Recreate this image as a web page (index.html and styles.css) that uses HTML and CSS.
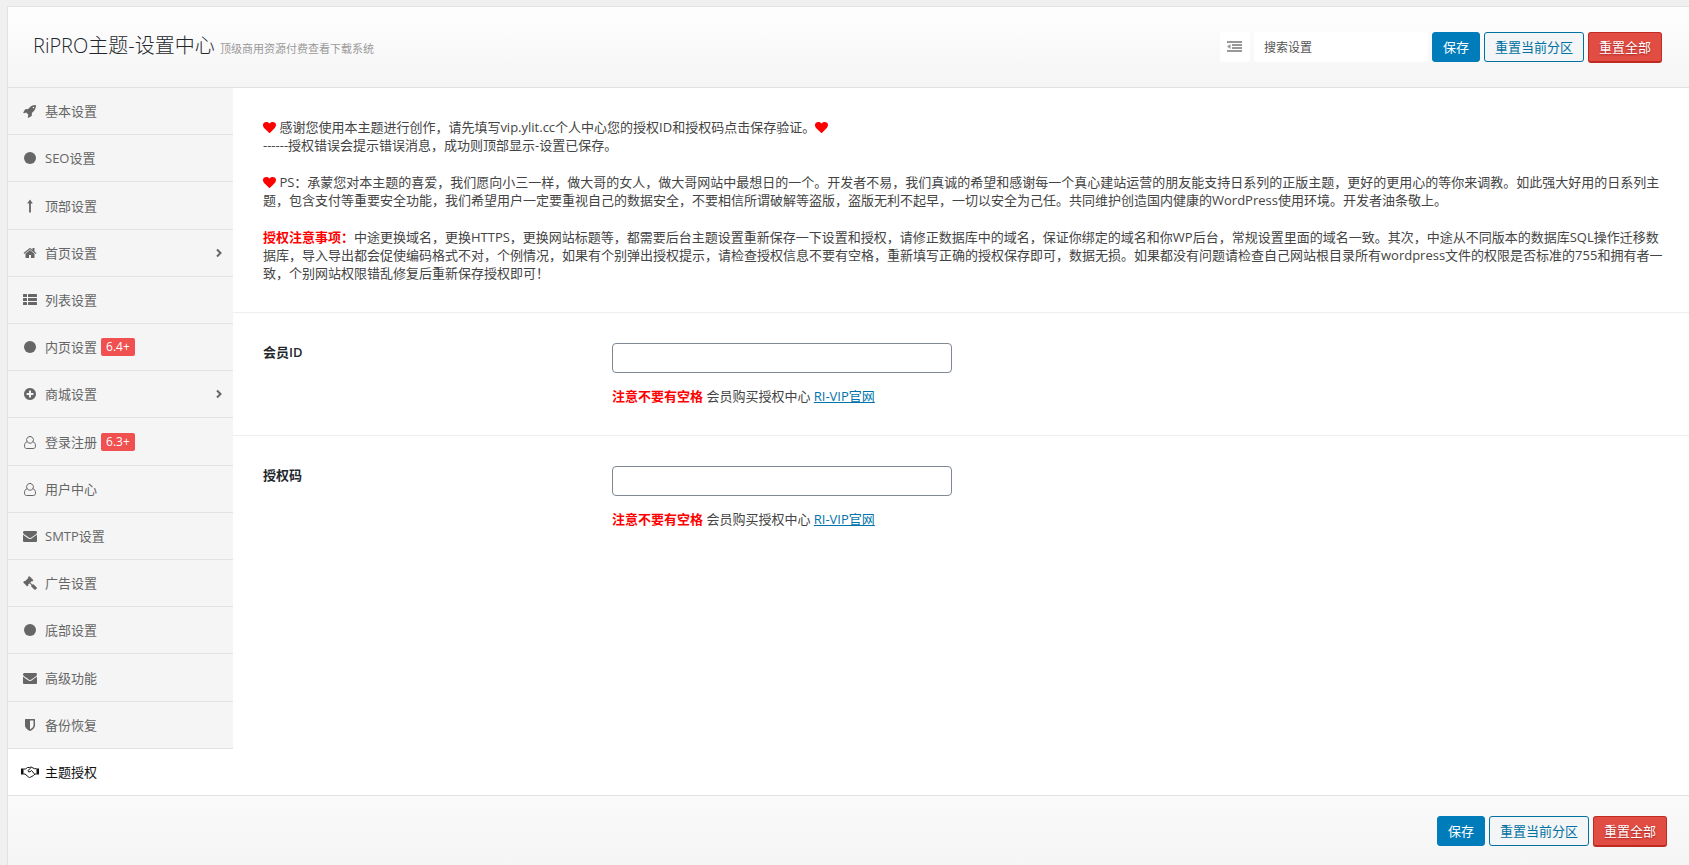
FILE: index.html
```html
<!DOCTYPE html>
<html lang="zh-CN">

<head>
    <meta charset="UTF-8">
    <meta name="viewport" content="width=device-width, initial-scale=1.0">
    <title>RiPRO主题-设置中心</title>
    <link rel="stylesheet" href="styles.css">
</head>

<body>
    <!-- Icon sprite -->
    <svg class="sprite" aria-hidden="true">
        <symbol id="rocket" viewBox="0 0 1792 1792"><path d="M1440 448q0-40-28-68t-68-28-68 28-28 68 28 68 68 28 68-28 28-68zm224-288q0 249-75.5 430.5t-253.5 360.5q-81 80-195 176l-20 379q-2 16-16 26l-384 224q-7 4-16 4-12 0-23-9l-64-64q-13-14-8-32l85-276-281-281-276 85q-3 1-9 1-14 0-23-9l-64-64q-17-19-5-39l224-384q10-14 26-16l379-20q96-114 176-195 188-187 358-258t431-71q14 0 24 9.5t10 22.5z"/></symbol>
        <symbol id="circle" viewBox="0 0 1792 1792"><circle cx="896" cy="896" r="768"/></symbol>
        <symbol id="arrow-up" viewBox="0 0 14 14"><path d="M6.100 13.500V4.500H4.200L7 .5L9.800 4.500H7.900V13.500Z"/></symbol>
        <symbol id="home" viewBox="0 0 1792 1792"><path d="M1472 992v480q0 26-19 45t-45 19h-384v-384h-256v384h-384q-26 0-45-19t-19-45v-480q0-1 .5-3t.5-3l575-474 575 474q1 2 1 6zm223-69l-62 74q-8 9-21 11h-3q-13 0-21-7l-692-577-692 577q-12 8-24 7-13-2-21-11l-62-74q-8-10-7-23.5t11-21.5l719-599q32-26 76-26t76 26l244 204v-195q0-14 9-23t23-9h192q14 0 23 9t9 23v408l219 182q10 8 11 21.5t-7 23.5z"/></symbol>
        <symbol id="th-list" viewBox="0 0 14 14"><rect y="1" width="4" height="3" rx=".6"/><rect x="5" y="1" width="9" height="3" rx=".6"/><rect y="5" width="4" height="3" rx=".6"/><rect x="5" y="5" width="9" height="3" rx=".6"/><rect y="9" width="4" height="3" rx=".6"/><rect x="5" y="9" width="9" height="3" rx=".6"/></symbol>
        <symbol id="plus-circle" viewBox="0 0 1792 1792"><path d="M1344 960v-128q0-26-19-45t-45-19h-256v-256q0-26-19-45t-45-19h-128q-26 0-45 19t-19 45v256h-256q-26 0-45 19t-19 45v128q0 26 19 45t45 19h256v256q0 26 19 45t45 19h128q26 0 45-19t19-45v-256h256q26 0 45-19t19-45zm320-64q0 209-103 385.5t-279.5 279.5-385.5 103-385.5-103-279.5-279.5-103-385.5 103-385.5 279.5-279.5 385.5-103 385.5 103 279.5 279.5 103 385.5z"/></symbol>
        <symbol id="user" viewBox="0 0 14 14"><path d="M4.2 6.8A3.4 3.4 0 1 1 9.8 6.8M4.2 6.8C2.3 7 1.5 8.700 1.500 11.200C1.500 12.600 2.300 13.500 3.600 13.500H10.400C11.700 13.500 12.500 12.600 12.500 11.200C12.500 8.700 11.700 7 9.800 6.800M4.200 6.800Q5.400 8.200 7 8.200T9.800 6.800" fill="none" stroke="currentColor"/></symbol>
        <symbol id="envelope" viewBox="0 0 1792 1792"><path d="M1792 710v794q0 66-47 113t-113 47h-1472q-66 0-113-47t-47-113v-794q44 49 101 87 362 246 497 345 57 42 92.500 65.500t94.500 48 110 24.500h2q51 0 110-24.500t94.500-48 92.500-65.500q170-123 498-345 57-39 100-87zm0-294q0 79-49 151t-122 123q-376 261-468 325-10 7-42.500 31t-54 38.500-52 32.500-57.500 27-50 9h-2q-23 0-50-9t-57.500-27-52-32.500-54-38.500-42.500-31q-91-64-262-182.500t-205-142.500q-62-42-117-115.500t-55-136.500q0-78 41.500-130t118.500-52h1472q65 0 112.500 47t47.500 113z"/></symbol>
        <symbol id="gavel" viewBox="0 0 1792 1792"><path d="M1771 1536q0 53-37 90l-107 108q-39 37-91 37-53 0-90-37l-363-364q-38-36-38-90 0-53 43-96l-256-256-126 126q-14 14-34 14t-34-14q2 2 12.500 12t12.500 13 10 11.500 10 13.500 6 13.500 5.500 16.500 1.500 18q0 38-28 68-3 3-16.500 18t-19 20.500-18.500 16.500-22 15.500-22 9-26 4.500q-40 0-68-28l-408-408q-28-28-28-68 0-13 4.500-26t9-22 15.500-22 16.500-18.500 20.500-19 18-16.500q30-28 68-28 10 0 18 1.500t16.500 5.500 13.500 6 13.500 10 11.500 10 13 12.500 12 12.500q-14-14-14-34t14-34l348-348q14-14 34-14t34 14q-2-2-12.500-12t-12.500-13-10-11.500-10-13.500-6-13.500-5.500-16.500-1.500-18q0-38 28-68 3-3 16.500-18t19-20.500 18.500-16.500 22-15.500 22-9 26-4.500q40 0 68 28l408 408q28 28 28 68 0 13-4.500 26t-9 22-15.500 22-16.500 18.500-20.500 19-18 16.500q-30 28-68 28-10 0-18-1.500t-16.500-5.500-13.500-6-13.500-10-11.500-10-13-12.500-12-12.500q14 14 14 34t-14 34l-126 126 256 256q43-43 96-43 52 0 91 37l363 363q37 39 37 91z"/></symbol>
        <symbol id="shield" viewBox="0 0 1792 1792"><path d="M1344 960v-640h-448v1137q119-63 213-137 235-184 235-360zm192-768v768q0 86-33.500 170.500t-83 150-118 127.500-126.500 103-121 77.500-89.500 49.500-42.500 20q-12 6-26 6t-26-6q-16-7-42.500-20t-89.500-49.500-121-77.500-126.500-103-118-127.500-83-150-33.500-170.500v-768q0-26 19-45t45-19h1152q26 0 45 19t19 45z"/></symbol>
        <symbol id="handshake" viewBox="0 0 18 14"><path d="M0 3.500H2.500V9.500H0ZM15.500 3.500H18V9.500H15.500Z"/><path d="M2.500 4H4.500L6.500 2.500H8.500L10 2L13.500 3.700H15.500M2.500 9H4L7.500 12Q8.500 13 9.500 12.200L12.500 10.500L14 9H15.500M9.800 3L7 5.500Q7 7.500 9 6.800L10.500 5.500L13.500 9" fill="none" stroke="currentColor"/></symbol>
        <symbol id="angle-right" viewBox="0 0 8 10"><path d="M2 1.500L5.500 5L2 8.500" fill="none" stroke="currentColor" stroke-width="2"/></symbol>
        <symbol id="heart" viewBox="0 0 1792 1792"><path d="M896 1664q-26 0-44-18l-624-602q-10-8-27.500-26t-55.500-65.500-68-97.500-53.500-121-23.500-138q0-220 127-344t351-124q62 0 126.500 21.500t120 58 95.500 68.500 76 68q36-36 76-68t95.500-68.500 120-58 126.500-21.500q224 0 351 124t127 344q0 221-229 450l-623 600q-18 18-44 18z"/></symbol>
        <symbol id="outdent" viewBox="0 0 15 12"><path d="M0 0H15V2H0ZM5 3H15V5H5ZM5 6H15V8H5ZM0 9H15V11H0ZM3.500 3V8L0 5.500Z"/></symbol>
    </svg>

    <form class="panel">
        <header class="header">
            <h1>RiPRO主题-设置中心 <small>顶级商用资源付费查看下载系统</small></h1>
            <div class="actions">
                <button type="button" class="expand" aria-label="展开全部"><svg><use href="#outdent"/></svg></button>
                <input type="text" class="search" placeholder="搜索设置" aria-label="搜索设置">
                <button type="submit" class="btn btn-primary">保存</button>
                <button type="button" class="btn btn-outline">重置当前分区</button>
                <button type="button" class="btn btn-danger">重置全部</button>
            </div>
        </header>

        <div class="main">
            <nav class="sidebar">
                <ul>
                    <li><a href="#"><svg class="icon"><use href="#rocket"/></svg>基本设置</a></li>
                    <li><a href="#"><svg class="icon"><use href="#circle"/></svg>SEO设置</a></li>
                    <li><a href="#"><svg class="icon"><use href="#arrow-up"/></svg>顶部设置</a></li>
                    <li><a href="#"><svg class="icon"><use href="#home"/></svg>首页设置<svg class="angle"><use href="#angle-right"/></svg></a></li>
                    <li><a href="#"><svg class="icon"><use href="#th-list"/></svg>列表设置</a></li>
                    <li><a href="#"><svg class="icon"><use href="#circle"/></svg>内页设置<span class="badge">6.4+</span></a></li>
                    <li><a href="#"><svg class="icon"><use href="#plus-circle"/></svg>商城设置<svg class="angle"><use href="#angle-right"/></svg></a></li>
                    <li><a href="#"><svg class="icon"><use href="#user"/></svg>登录注册<span class="badge">6.3+</span></a></li>
                    <li><a href="#"><svg class="icon"><use href="#user"/></svg>用户中心</a></li>
                    <li><a href="#"><svg class="icon"><use href="#envelope"/></svg>SMTP设置</a></li>
                    <li><a href="#"><svg class="icon"><use href="#gavel"/></svg>广告设置</a></li>
                    <li><a href="#"><svg class="icon"><use href="#circle"/></svg>底部设置</a></li>
                    <li><a href="#"><svg class="icon"><use href="#envelope"/></svg>高级功能</a></li>
                    <li><a href="#"><svg class="icon"><use href="#shield"/></svg>备份恢复</a></li>
                    <li><a href="#" class="active"><svg class="icon"><use href="#handshake"/></svg>主题授权</a></li>
                </ul>
            </nav>

            <div class="content">
                <section class="notice">
                    <p><svg class="heart"><use href="#heart"/></svg> 感谢您使用本主题进行创作，请先填写vip.ylit.cc个人中心您的授权ID和授权码点击保存验证。<svg class="heart"><use href="#heart"/></svg><br>------授权错误会提示错误消息，成功则顶部显示-设置已保存。</p>
                    <p><svg class="heart"><use href="#heart"/></svg> PS：承蒙您对本主题的喜爱，我们愿向小三一样，做大哥的女人，做大哥网站中最想日的一个。开发者不易，我们真诚的希望和感谢每一个真心建站运营的朋友能支持日系列的正版主题，更好的更用心的等你来调教。如此强大好用的日系列主题，包含支付等重要安全功能，我们希望用户一定要重视自己的数据安全，不要相信所谓破解等盗版，盗版无利不起早，一切以安全为己任。共同维护创造国内健康的WordPress使用环境。开发者油条敬上。</p>
                    <p><b>授权注意事项：</b>中途更换域名，更换HTTPS，更换网站标题等，都需要后台主题设置重新保存一下设置和授权，请修正数据库中的域名，保证你绑定的域名和你WP后台，常规设置里面的域名一致。其次，中途从不同版本的数据库SQL操作迁移数据库，导入导出都会促使编码格式不对，个例情况，如果有个别弹出授权提示，请检查授权信息不要有空格，重新填写正确的授权保存即可，数据无损。如果都没有问题请检查自己网站根目录所有wordpress文件的权限是否标准的755和拥有者一致，个别网站权限错乱修复后重新保存授权即可！</p>
                </section>

                <div class="field">
                    <label for="vipId">会员ID</label>
                    <div>
                        <input type="text" id="vipId">
                        <p><b>注意不要有空格</b> 会员购买授权中心 <a href="#">RI-VIP官网</a></p>
                    </div>
                </div>

                <div class="field">
                    <label for="vipCode">授权码</label>
                    <div>
                        <input type="text" id="vipCode">
                        <p><b>注意不要有空格</b> 会员购买授权中心 <a href="#">RI-VIP官网</a></p>
                    </div>
                </div>
            </div>
        </div>

        <footer class="footer">
            <div class="actions">
                <button type="submit" class="btn btn-primary">保存</button>
                <button type="button" class="btn btn-outline">重置当前分区</button>
                <button type="button" class="btn btn-danger">重置全部</button>
            </div>
        </footer>
    </form>
</body>

</html>
```

FILE: styles.css
```css
* {
    box-sizing: border-box;
}

body {
    margin: 0;
    background: #f0f0f0;
    color: #444;
    font-family: "Open Sans", "Noto Sans CJK SC", sans-serif;
    font-size: 13px;
    line-height: 18px;
}

h1,
p,
ul {
    margin: 0;
    padding: 0;
}

svg {
    fill: currentColor;
}

.sprite {
    display: none;
}

.panel {
    display: flex;
    flex-direction: column;
    min-height: 100vh;
    padding: 6px 0 0 7px;
}

.header,
.main,
.footer {
    border-left: 1px solid #e2e2e2;
}

/* Header */
.header {
    display: flex;
    align-items: flex-start;
    justify-content: space-between;
    padding: 25px 27px 24px 25px;
    border-top: 1px solid #e2e2e2;
    border-bottom: 1px solid #e2e2e2;
    background: linear-gradient(#fefefe, #f5f5f5);
}

.header h1 {
    color: #23282d;
    font-size: 20px;
    font-weight: 300;
    line-height: 28px;
}

.header small {
    color: #999;
    font-size: 11px;
    font-weight: 400;
}

.actions {
    display: flex;
    align-items: flex-start;
    gap: 4px;
}

.expand,
.search {
    height: 30px;
    border: 0;
    border-radius: 3px;
    background: #fff;
    font-family: inherit;
}

.expand {
    display: flex;
    align-items: center;
    justify-content: center;
    width: 30px;
    padding: 0;
    color: #999;
}

.expand svg {
    width: 15px;
    height: 12px;
}

.search {
    width: 174px;
    padding: 0 10px;
    font-size: 12px;
}

.search::placeholder {
    color: #555;
}

.btn {
    height: 30px;
    padding: 0 10px;
    border: 1px solid #007cba;
    border-radius: 3px;
    font-family: inherit;
    font-size: 13px;
    line-height: 28px;
}

.btn-primary {
    background: #007cba;
    color: #fff;
}

.btn-outline {
    border-color: #0071a1;
    background: #f3f5f6;
    color: #0071a1;
}

.btn-danger {
    height: 31px;
    border-color: #c12a22;
    border-bottom-width: 2px;
    background: #e14d43;
    color: #fff;
    text-shadow: 0 1px 2px #a02222;
}

/* Sidebar */
.main {
    display: flex;
    flex: 1;
    background: #fff;
}

.sidebar {
    display: flex;
    flex: 0 0 225px;
}

.sidebar ul {
    display: flex;
    flex: 1;
    flex-direction: column;
    list-style: none;
}

.sidebar li {
    display: flex;
    flex: 1;
    border-bottom: 1px solid #e2e2e2;
    background: #f5f5f5;
}

.sidebar li:last-child {
    border-bottom: 0;
}

.sidebar a {
    display: flex;
    flex: 1;
    align-items: center;
    padding: 14px 10px 14px 12px;
    color: #666;
    text-decoration: none;
}

.sidebar .active {
    background: #fff;
    color: #111;
}

.icon {
    width: 20px;
    height: 14px;
    margin-right: 5px;
}

.angle {
    width: 8px;
    height: 10px;
    margin-left: auto;
}

.badge {
    margin-left: 4px;
    padding: 0 5px;
    border-radius: 2px;
    background: #f05050;
    color: #fff;
    font-size: 12px;
}

/* Content */
.content {
    flex: 1;
}

.notice {
    padding: 30px 24px 30px 30px;
}

.notice p + p {
    margin-top: 19px;
}

.heart {
    width: 13px;
    height: 13px;
    color: #f00;
    vertical-align: -2px;
}

b {
    color: #f00;
}

.field {
    display: grid;
    grid-template-columns: 1fr 3fr;
    padding: 30px;
    border-top: 1px solid #eee;
}

.field label {
    color: #23282d;
    font-weight: 600;
}

.field input {
    display: block;
    width: 340px;
    height: 30px;
    padding: 0 8px;
    border: 1px solid #7e8993;
    border-radius: 4px;
    font-family: inherit;
    font-size: 13px;
}

.field p {
    margin-top: 14px;
}

.field a {
    color: #0073aa;
}

/* Footer */
.footer {
    display: flex;
    justify-content: flex-end;
    padding: 20px 22px 18px;
    border-top: 1px solid #e2e2e2;
    background: linear-gradient(#fafafa, #f5f5f5);
}
```
